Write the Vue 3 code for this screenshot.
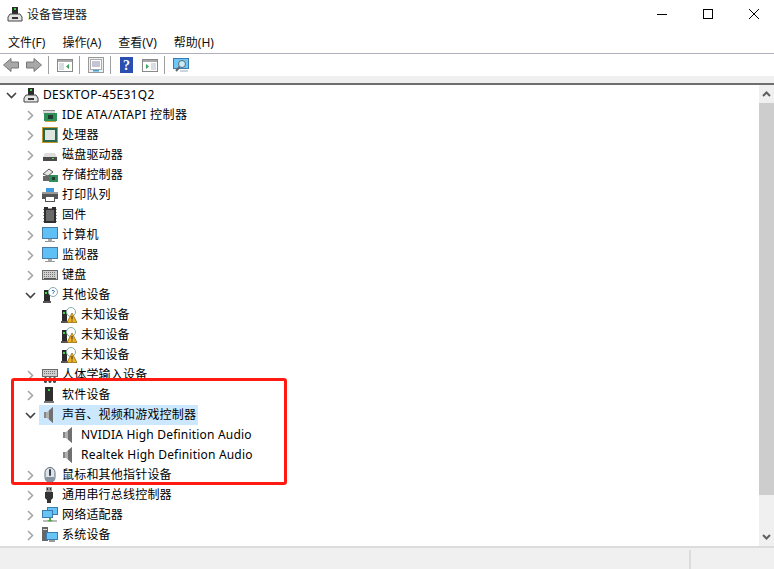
<script setup>
const I = {
  device: `<rect x="5" y="1" width="6" height="7" fill="#2b2b2b"/><rect x="7" y="2" width="2" height="2" fill="#3fd24a"/><path d="M3 8h10l2 3v4H1v-4z" fill="#e4e4e4" stroke="#444"/><rect x="5" y="11" width="6" height="2" fill="#333"/>`,
  ide: `<path d="M1 3h12v4H1z" fill="#d8d8d8"/><path d="M1 3h12v1H1z" fill="#8a8a8a"/><rect x="2" y="6" width="13" height="8" fill="#2f8f5b"/><rect x="6" y="8" width="5" height="4" fill="#1e3d30"/><path d="M3 14h11v1H3z" fill="#c9a53c"/>`,
  cpu: `<rect x="0" y="0" width="16" height="16" fill="#c59a34"/><rect x="1" y="1" width="14" height="14" fill="#27664a"/><rect x="3" y="3" width="10" height="10" fill="#dfe5df"/>`,
  disk: `<path d="M3 6h10l2 4H1z" fill="#dcdcdc"/><rect x="1" y="10" width="14" height="4" fill="#4a4a4a"/><rect x="10" y="11" width="2" height="1" fill="#4fe04f"/>`,
  storage: `<path d="M1 7l6-5 4 3-5 4z" fill="#e8e8e8" stroke="#555"/><rect x="1" y="9" width="9" height="5" fill="#666"/><rect x="7" y="8" width="9" height="7" fill="#2f8f5b"/><rect x="10" y="10" width="3" height="3" fill="#1e3d30"/>`,
  printer: `<rect x="4" y="1" width="8" height="5" fill="#3d9be0"/><rect x="0" y="5" width="16" height="7" fill="#555"/><rect x="0" y="5" width="16" height="2" fill="#9a9a9a"/><rect x="3.500" y="9.500" width="9" height="5" fill="#fff" stroke="#555"/>`,
  chip: `<path d="M2 0h4v1.500h4V0h4v16H2z" fill="#2e2e2e"/><rect x="4" y="3" width="8" height="11" fill="#6a6a6a"/><path d="M1 2h1v1H1zM1 5h1v1H1zM1 8h1v1H1zM1 11h1v1H1zM1 14h1v1H1zM14 2h1v1h-1zM14 5h1v1h-1zM14 8h1v1h-1zM14 11h1v1h-1zM14 14h1v1h-1z" fill="#999"/>`,
  pc: `<rect x="0" y="0" width="16" height="12" fill="#4a7ba6"/><rect x="1" y="1" width="14" height="10" fill="#5ec0f5"/><rect x="6" y="12" width="4" height="2" fill="#aaa"/><rect x="3" y="14" width="10" height="1" fill="#999"/>`,
  keyboard: `<rect x="0" y="3" width="16" height="10" fill="#6a6a6a"/><rect x="1" y="4" width="14" height="8" fill="#d0d0d0"/><path d="M2 5.500h12M2 7.500h12M2 9.500h12" stroke="#777" stroke-dasharray="1 1"/><path d="M2 11.500h12" stroke="#555"/>`,
  other: `<rect x="2" y="3" width="6" height="12" fill="#2b2b2b"/><rect x="3" y="5" width="2" height="2" fill="#3fd24a"/><rect x="1" y="14" width="8" height="2" fill="#555"/><circle cx="11" cy="5" r="4.500" fill="#fff" stroke="#8aa"/><path d="M9.800 3.800q1.200-1 2.300 0t-1 2.200v.6" fill="none" stroke="#3a78c2"/>`,
  unknown: `<rect x="1" y="3" width="5" height="12" fill="#2b2b2b"/><rect x="2" y="5" width="2" height="2" fill="#3fd24a"/><rect x="0" y="14" width="7" height="2" fill="#555"/><circle cx="10" cy="5" r="4.500" fill="#fff" stroke="#8aa"/><path d="M11 6l5 9.500H6z" fill="#f0b323" stroke="#8a6000" stroke-width=".7"/><path d="M11 9v3.500M11 13.500v1" stroke="#222"/>`,
  hid: `<rect x="0" y="2" width="16" height="8" fill="#6a6a6a"/><rect x="1" y="3" width="14" height="6" fill="#d0d0d0"/><path d="M2 4.500h12M2 6.500h12" stroke="#777" stroke-dasharray="1 1"/><rect x="2" y="10" width="3" height="6" rx="1.500" fill="#444"/><rect x="6.500" y="10" width="3" height="6" rx="1.500" fill="#444"/><rect x="11" y="10" width="3" height="6" rx="1.500" fill="#444"/>`,
  soft: `<rect x="3" y="0" width="8" height="15" fill="#2e2e2e"/><rect x="6" y="2" width="2" height="2" fill="#3fd24a"/><rect x="2" y="14" width="10" height="2" fill="#777"/>`,
  sound: `<path d="M2 5h3l6-5v16l-6-5H2z" fill="#b0b0b0"/><path d="M7 3.500l4-3.500v16l-4-3.500z" fill="#707070"/><path d="M2 5h2v6H2z" fill="#858585"/>`,
  mouse: `<rect x="3" y=".5" width="10" height="15" rx="5" fill="#dfe3e8" stroke="#5a6a7a"/><rect x="7" y="2" width="2" height="7" rx="1" fill="#345"/><path d="M4 10h8v3l-2 2H6l-2-2z" fill="#8593a3"/>`,
  usb: `<rect x="4" y="0" width="6" height="5" fill="#9a9a9a"/><rect x="5" y="1" width="1" height="2" fill="#333"/><rect x="8" y="1" width="1" height="2" fill="#333"/><path d="M3 5h8v6l-2 2v3H5v-3l-2-2z" fill="#333"/>`,
  net: `<rect x="5" y="0" width="11" height="8" fill="#3a7bb0"/><rect x="6" y="1" width="9" height="6" fill="#67c4f5"/><rect x="0" y="3" width="11" height="8" fill="#3a7bb0"/><rect x="1" y="4" width="9" height="6" fill="#67c4f5"/><path d="M1 14h14" stroke="#bbb" stroke-width="2"/><path d="M7 11h2v2h2l-3 2-3-2h2z" fill="#4cae3f"/>`,
  sys: `<rect x="0" y="0" width="6" height="14" fill="#666"/><rect x="1" y="2" width="4" height="1" fill="#ddd"/><rect x="4" y="5" width="12" height="8" fill="#3a7bb0"/><rect x="5" y="6" width="10" height="6" fill="#67c4f5"/><rect x="7" y="13" width="6" height="2" fill="#999"/>`
}

const rows = [
  { t: 'DESKTOP-45E31Q2', i: 'device', d: 0, c: 'down', cls: 'w1' },
  { t: 'IDE ATA/ATAPI 控制器', i: 'ide', d: 1, c: 'right', cls: 'w2' },
  { t: '处理器', i: 'cpu', d: 1, c: 'right' },
  { t: '磁盘驱动器', i: 'disk', d: 1, c: 'right' },
  { t: '存储控制器', i: 'storage', d: 1, c: 'right' },
  { t: '打印队列', i: 'printer', d: 1, c: 'right' },
  { t: '固件', i: 'chip', d: 1, c: 'right' },
  { t: '计算机', i: 'pc', d: 1, c: 'right' },
  { t: '监视器', i: 'pc', d: 1, c: 'right' },
  { t: '键盘', i: 'keyboard', d: 1, c: 'right' },
  { t: '其他设备', i: 'other', d: 1, c: 'down' },
  { t: '未知设备', i: 'unknown', d: 2 },
  { t: '未知设备', i: 'unknown', d: 2 },
  { t: '未知设备', i: 'unknown', d: 2 },
  { t: '人体学输入设备', i: 'hid', d: 1, c: 'right' },
  { t: '软件设备', i: 'soft', d: 1, c: 'right' },
  { t: '声音、视频和游戏控制器', i: 'sound', d: 1, c: 'down', sel: true },
  { t: 'NVIDIA High Definition Audio', i: 'sound', d: 2 },
  { t: 'Realtek High Definition Audio', i: 'sound', d: 2 },
  { t: '鼠标和其他指针设备', i: 'mouse', d: 1, c: 'right' },
  { t: '通用串行总线控制器', i: 'usb', d: 1, c: 'right' },
  { t: '网络适配器', i: 'net', d: 1, c: 'right' },
  { t: '系统设备', i: 'sys', d: 1, c: 'right' }
]
const menus = [['文件', 'F'], ['操作', 'A'], ['查看', 'V'], ['帮助', 'H']]
</script>

<template>
  <div class="win">
    <header class="title">
      <svg class="ico" viewBox="0 0 16 16" v-html="I.device"></svg>
      <span class="title-text">设备管理器</span>
      <div class="controls">
        <svg width="12" height="12" viewBox="0 0 12 12"><path d="M1 6.500h10" stroke="#000"/></svg>
        <svg width="12" height="12" viewBox="0 0 12 12"><rect x="1.500" y="1.500" width="9" height="9" fill="none" stroke="#000"/></svg>
        <svg width="12" height="12" viewBox="0 0 12 12"><path d="M1 1l10 10M11 1L1 11" stroke="#000"/></svg>
      </div>
    </header>

    <nav class="menu">
      <span v-for="m in menus" :key="m[1]" class="menu-item">{{ m[0] }}(<u>{{ m[1] }}</u>)</span>
    </nav>

    <div class="toolbar">
      <svg class="ico" viewBox="0 0 16 16"><path d="M.5 8L8 1.500V5h7.500v6H8v3.500z" fill="#a8a8a8" stroke="#777"/></svg>
      <svg class="ico next" viewBox="0 0 16 16"><path d="M15.500 8L8 1.500V5H.5v6H8v3.500z" fill="#a8a8a8" stroke="#777"/></svg>
      <i class="sep s1"></i>
      <svg class="ico" viewBox="0 0 16 16"><rect x=".5" y="2.500" width="15" height="12" fill="#fff" stroke="#888"/><rect x="1" y="3" width="14" height="2" fill="#aaa"/><rect x="2" y="6" width="5" height="7" fill="#d8dde2"/><path d="M12 7v5l-3-2.500z" fill="#3aa655"/></svg>
      <i class="sep s2"></i>
      <svg class="ico" viewBox="0 0 16 16"><rect x=".5" y=".5" width="15" height="15" fill="#eef1f4" stroke="#999"/><rect x="2.500" y="2.500" width="11" height="10" fill="#fff" stroke="#aaa"/><path d="M4 5h8M4 7h8M4 9h8" stroke="#88a"/><rect x="5" y="13" width="6" height="1.500" fill="#3ea0e0"/></svg>
      <i class="sep s3"></i>
      <svg class="ico help" viewBox="0 0 14 16"><rect width="13" height="16" fill="#2a4fb0"/><text x="6.500" y="13" text-anchor="middle" class="q">?</text></svg>
      <svg class="ico pane" viewBox="0 0 16 16"><rect x=".5" y="2.500" width="15" height="12" fill="#fff" stroke="#888"/><rect x="1" y="3" width="14" height="2" fill="#aaa"/><rect x="9" y="6" width="5" height="7" fill="#d8dde2"/><path d="M4 7v5l3-2.500z" fill="#3aa655"/></svg>
      <i class="sep s4"></i>
      <svg class="ico" viewBox="0 0 16 16"><rect x="0" y="1" width="16" height="11" fill="#3a7bb0"/><rect x="1" y="2" width="14" height="9" fill="#6cc8f5"/><circle cx="9" cy="7" r="3.500" fill="#c8ecfb" stroke="#666"/><path d="M6.500 10L3 14" stroke="#666" stroke-width="2"/><path d="M7 14h8" stroke="#9ab"/></svg>
    </div>
    <div class="band"></div>

    <main class="body">
      <div class="tree">
        <div v-for="(r, n) in rows" :key="n" class="row" :class="'d' + r.d">
          <span class="chev">
            <svg v-if="r.c === 'right'" width="9" height="11" viewBox="0 0 9 11"><path d="M2 1l4.500 4.500L2 10" fill="none" stroke="#a6a6a6" stroke-width="1.600"/></svg>
            <svg v-else-if="r.c === 'down'" width="11" height="9" viewBox="0 0 11 9"><path d="M1 2l4.500 4.500L10 2" fill="none" stroke="#404040" stroke-width="1.600"/></svg>
          </span>
          <span class="cell" :class="{ sel: r.sel }">
            <svg class="ico" viewBox="0 0 16 16" v-html="I[r.i]"></svg>
            <span class="label" :class="r.cls">{{ r.t }}</span>
          </span>
        </div>
      </div>
      <div class="scroll">
        <svg width="15" height="18" viewBox="0 0 15 18"><path d="M4 11l3.500-3.500L11 11" fill="none" stroke="#606060" stroke-width="2"/></svg>
        <div class="thumb"></div>
        <svg class="down" width="15" height="18" viewBox="0 0 15 18"><path d="M4 7l3.500 3.500L11 7" fill="none" stroke="#606060" stroke-width="2"/></svg>
      </div>
    </main>

    <footer class="status"><i></i></footer>

    <div class="mark"></div>
  </div>
</template>

<style>
html, body { margin: 0; background: #fff; overflow: hidden; }
</style>

<style scoped>
.win {
  position: relative;
  width: 774px;
  height: 569px;
  display: flex;
  flex-direction: column;
  background: #fff;
  font-family: "Noto Sans", "Noto Sans CJK SC", sans-serif;
  font-size: 12px;
  color: #000;
  overflow: hidden;
}
.ico { width: 16px; height: 16px; flex: none; display: block; }
.title { height: 30px; display: flex; align-items: center; padding-left: 7px; box-sizing: border-box; padding-bottom: 2px; }
.title-text { margin-left: 4px; color: #1a1a1a; }
.controls { margin-left: auto; display: flex; gap: 34px; padding-right: 14px; }
.menu { height: 23px; display: flex; padding-left: 8px; gap: 17px; align-items: center; border-bottom: 1px solid #b0b0bc; }
.menu-item { color: #111; }
.menu-item u { text-decoration: none; }
.toolbar { height: 22px; display: flex; align-items: center; padding-left: 3px; box-sizing: border-box; }
.next { margin-left: 7px; }
.sep { width: 1px; height: 18px; background: #a0a0a0; flex: none; }
.s1, .s2, .s4 { margin: 0 8px 0 6px; }
.s3 { margin: 0 9px 0 6px; }
.help { width: 14px; }
.pane { margin-left: 8px; }
.q { font: 700 14px "Liberation Serif", serif; fill: #fff; }
.band { height: 7px; background: #f0f0f0; border-bottom: 2px solid #6e6e6e; }
.body { flex: 1; display: flex; min-height: 0; }
.tree { flex: 1; min-width: 0; }
.row { height: 20px; display: flex; align-items: center; }
.chev { width: 18px; height: 20px; display: flex; align-items: center; justify-content: center; flex: none; }
.d0 { padding-left: 2px; }
.d1 { padding-left: 21px; }
.d2 { padding-left: 40px; }
.cell { height: 20px; display: flex; align-items: center; gap: 4px; padding: 0 2px 0 3px; }
.sel { background: #cce8ff; }
.label { white-space: nowrap; letter-spacing: 0.2px; margin-bottom: 2px; }
.w1 { letter-spacing: 0.33px; }
.w2 { letter-spacing: 0.42px; }
.scroll { width: 15px; background: #f0f0f0; display: flex; flex-direction: column; }
.thumb { height: 392px; background: #cdcdcd; flex: none; }
.down { margin-top: auto; }
.status { height: 23px; flex: none; background: #f0f0f0; border-top: 2px solid #dcdcdc; box-sizing: border-box; display: flex; padding-top: 2px; padding-left: 689px; }
.status i { width: 2px; background: #dcdcdc; }
.mark { position: absolute; left: 11px; top: 378px; width: 276px; height: 107px; box-sizing: border-box; border: 3px solid #ff1a12; border-radius: 3px; }
</style>
